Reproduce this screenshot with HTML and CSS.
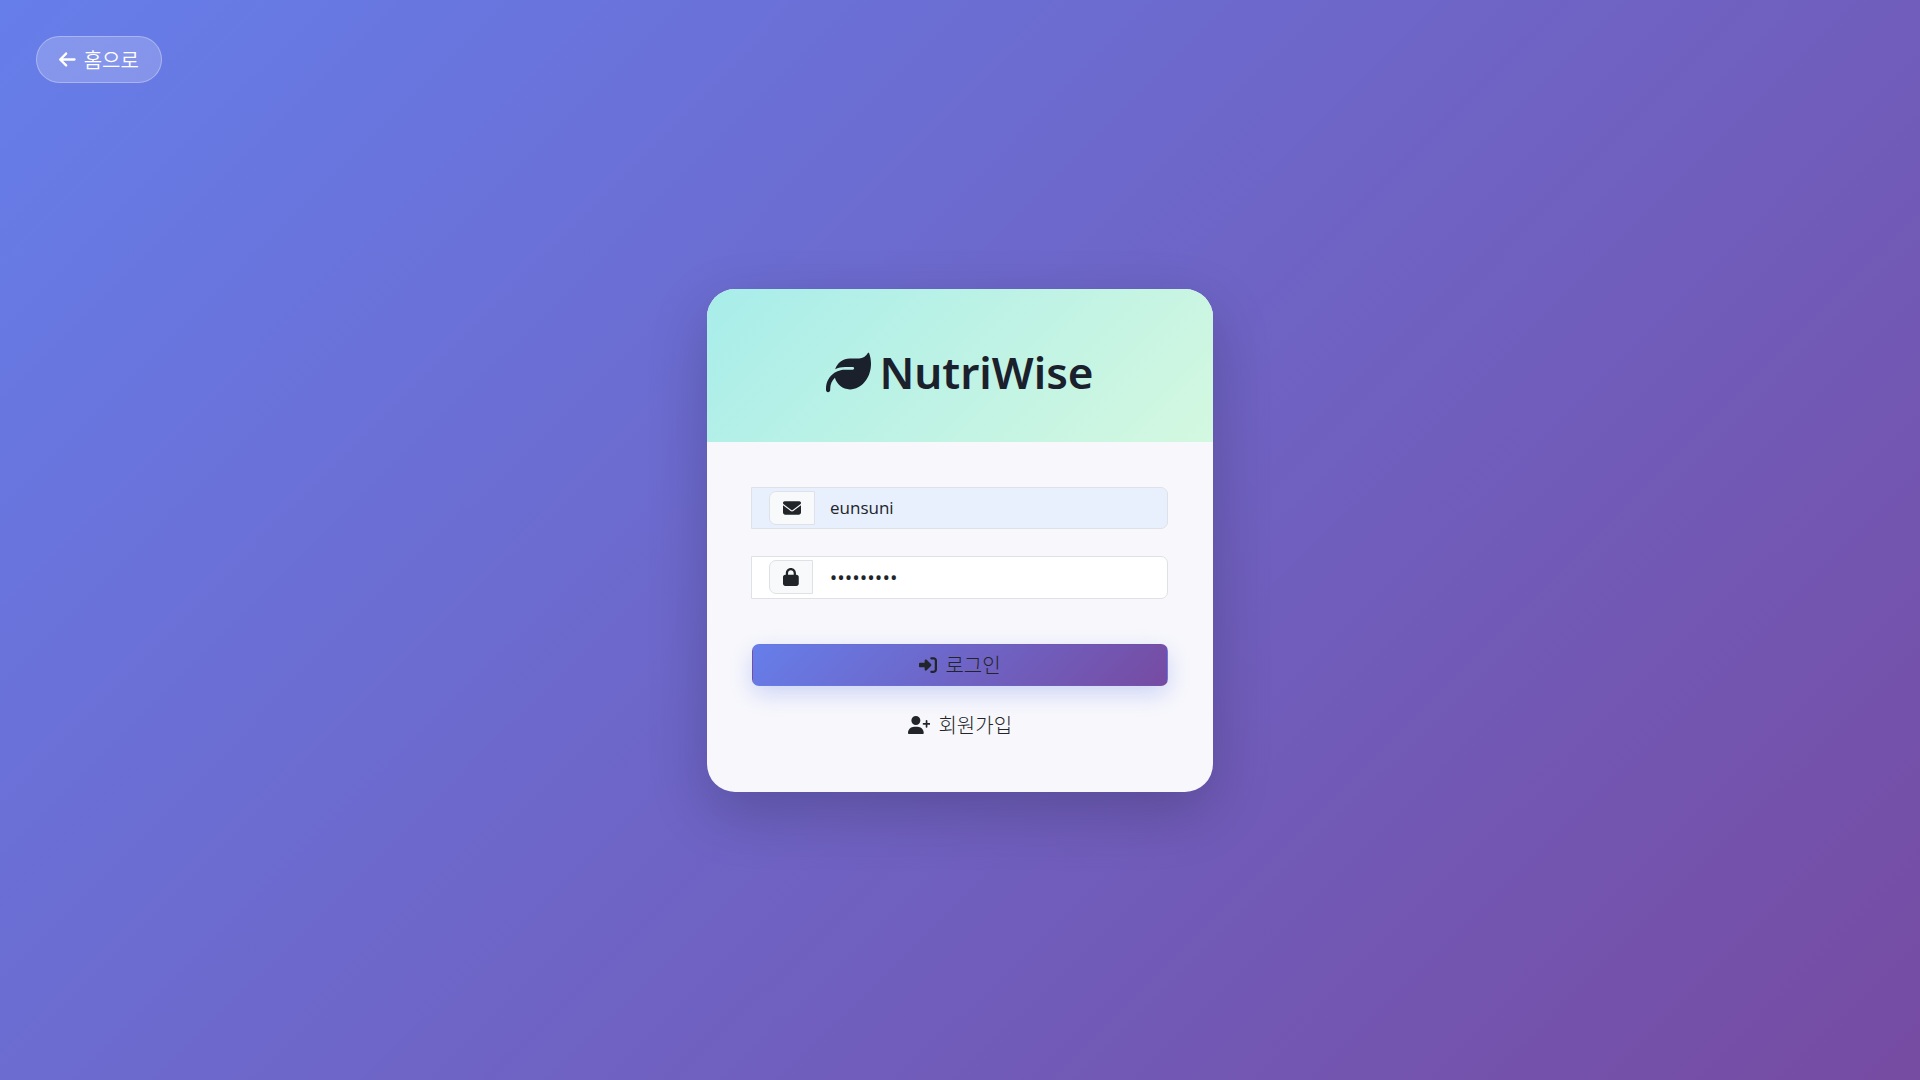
FILE: index.html
```html
<!DOCTYPE html>
<html lang="ko">
<head>
<meta charset="utf-8">
<meta name="viewport" content="width=device-width, initial-scale=1">
<title>NutriWise</title>
<link rel="stylesheet" href="styles.css">
</head>
<body>
<a class="home-link" href="#">
  <svg class="icon" viewBox="0 0 448 512" aria-hidden="true"><path d="M9.4 233.4c-12.5 12.5-12.5 32.8 0 45.3l160 160c12.5 12.5 32.8 12.5 45.3 0s12.5-32.8 0-45.3L109.2 288 416 288c17.7 0 32-14.3 32-32s-14.3-32-32-32l-306.7 0L214.6 118.6c12.5-12.5 12.5-32.8 0-45.3s-32.8-12.5-45.3 0l-160 160z"/></svg>
  <span>홈으로</span>
</a>
<main class="page">
  <section class="card">
    <header class="card-header">
      <h1 class="brand">
        <svg class="icon" viewBox="0 0 512 512" aria-hidden="true"><path d="M272 96c-78.6 0-145.1 51.5-167.7 122.5c33.6-17 71.5-26.5 111.7-26.5h88c8.8 0 16 7.2 16 16s-7.2 16-16 16H288 216s0 0 0 0c-16.6 0-32.7 1.9-48.3 5.4c-25.9 5.9-49.9 16.4-71.4 30.7c0 0 0 0 0 0C38.3 298.8 0 364.9 0 440v16c0 13.3 10.7 24 24 24s24-10.7 24-24V440c0-48.7 20.7-92.5 53.8-123.2C121.6 392.3 190.3 448 272 448l1 0c132.1-.7 239-130.9 239-291.4c0-42.6-7.5-83.1-21.1-119.6c-2.6-6.9-12.7-6.6-16.2-.1C455.9 72.1 418.7 96 376 96L272 96z"/></svg>
        <span>NutriWise</span>
      </h1>
    </header>
    <form class="card-body">
      <div class="field field-filled">
        <label class="addon" for="user" aria-label="아이디">
          <svg class="icon" viewBox="0 0 512 512" aria-hidden="true"><path d="M48 64C21.5 64 0 85.5 0 112c0 15.1 7.1 29.3 19.2 38.4L236.8 313.6c11.4 8.5 27 8.5 38.4 0L492.8 150.4c12.1-9.1 19.2-23.3 19.2-38.4c0-26.5-21.5-48-48-48H48zM0 176V384c0 35.3 28.7 64 64 64H448c35.3 0 64-28.7 64-64V176L294.4 339.2c-22.8 17.1-54 17.1-76.8 0L0 176z"/></svg>
        </label>
        <input class="input" id="user" type="text" value="eunsuni">
      </div>
      <div class="field field-password">
        <label class="addon" for="password" aria-label="비밀번호">
          <svg class="icon" viewBox="0 0 448 512" aria-hidden="true"><path d="M144 144v48H304V144c0-44.2-35.8-80-80-80s-80 35.8-80 80zM80 192V144C80 64.5 144.5 0 224 0s144 64.5 144 144v48h16c35.3 0 64 28.7 64 64V448c0 35.3-28.7 64-64 64H64c-35.3 0-64-28.7-64-64V256c0-35.3 28.7-64 64-64H80z"/></svg>
        </label>
        <input class="input" id="password" type="password" value="nutriwise">
      </div>
      <button class="btn btn-primary" type="submit">
        <svg class="icon" viewBox="0 0 512 512" aria-hidden="true"><path d="M217.9 105.9L340.7 228.7c7.2 7.2 11.3 17.1 11.3 27.3s-4.1 20.1-11.3 27.3L217.9 406.1c-6.4 6.4-15 9.9-24 9.9c-18.7 0-33.9-15.2-33.9-33.9l0-62.1L32 320c-17.7 0-32-14.3-32-32l0-64c0-17.7 14.3-32 32-32l128 0 0-62.1c0-18.7 15.2-33.9 33.9-33.9c9 0 17.6 3.6 24 9.9zM352 416l64 0c17.7 0 32-14.3 32-32l0-256c0-17.7-14.3-32-32-32l-64 0c-17.7 0-32-14.3-32-32s14.3-32 32-32l64 0c53 0 96 43 96 96l0 256c0 53-43 96-96 96l-64 0c-17.7 0-32-14.3-32-32s14.3-32 32-32z"/></svg>
        <span>로그인</span>
      </button>
      <a class="btn" href="#">
        <svg class="icon" viewBox="0 0 640 512" aria-hidden="true"><path d="M96 128a128 128 0 1 1 256 0A128 128 0 1 1 96 128zM0 482.3C0 383.8 79.8 304 178.3 304h91.4C368.2 304 448 383.8 448 482.3c0 16.4-13.3 29.7-29.7 29.7H29.7C13.3 512 0 498.7 0 482.3zM504 312V248H440c-13.3 0-24-10.7-24-24s10.7-24 24-24h64V136c0-13.3 10.7-24 24-24s24 10.7 24 24v64h64c13.3 0 24 10.7 24 24s-10.7 24-24 24H552v64c0 13.3-10.7 24-24 24s-24-10.7-24-24z"/></svg>
        <span>회원가입</span>
      </a>
    </form>
  </section>
</main>
</body>
</html>
```
FILE: styles.css
```css
*,
*::before,
*::after {
  box-sizing: border-box;
}

body {
  margin: 0;
  min-height: 100vh;
  background: linear-gradient(135deg, #667eea 0%, #764ba2 100%);
  color: #212529;
  font-family: "Open Sans", "Noto Sans CJK KR", sans-serif;
  font-size: 17px;
  line-height: 23px;
}

.icon {
  flex: none;
  height: 18px;
  fill: currentColor;
}

.page {
  display: flex;
  align-items: center;
  justify-content: center;
  min-height: 100vh;
  padding: 24px;
}

.home-link {
  position: absolute;
  top: 36px;
  left: 36px;
  display: flex;
  align-items: center;
  gap: 8px;
  padding: 11px 22px;
  border: 1px solid rgba(255, 255, 255, 0.3);
  border-radius: 24px;
  background: rgba(255, 255, 255, 0.2);
  color: #fff;
  font-family: "Noto Sans CJK KR", sans-serif;
  font-size: 20px;
  font-weight: 350;
  text-decoration: none;
}

.home-link .icon {
  height: 19px;
}

.card {
  width: 100%;
  max-width: 506px;
  overflow: hidden;
  border-radius: 28px;
  background: #f8f8fc;
  box-shadow: 0 20px 60px rgba(0, 0, 0, 0.2);
}

.card-header {
  padding: 52px 45px 38px;
  background: linear-gradient(135deg, #a8edea 0%, #d4f8e0 100%);
}

.brand {
  display: flex;
  align-items: center;
  justify-content: center;
  gap: 8px;
  margin: 0;
  color: #1a202c;
  font-family: "Noto Sans", sans-serif;
  font-size: 44px;
  font-weight: 600;
  line-height: 63px;
}

.brand .icon {
  height: 45px;
}

.card-body {
  display: flex;
  flex-direction: column;
  padding: 45px 45px 46px;
}

.field {
  display: flex;
  align-items: center;
  height: 42px;
  margin: 0 0 27px -1px;
  padding-left: 17px;
  border: 1px solid #dee2e6;
  border-radius: 0 7px 7px 0;
  background: #fff;
}

.field-filled {
  background: #e8f0fe;
}

.field-password {
  height: 43px;
}

.addon {
  display: flex;
  align-items: center;
  height: 34px;
  padding: 0 13px;
  border: 1px solid #dee2e6;
  border-radius: 7px 0 0 7px;
  background: #f8f9fa;
}

.addon .icon {
  height: 18px;
}

.input {
  flex: 1;
  min-width: 0;
  padding: 0 15px;
  border: 0;
  outline: 0;
  background: transparent;
  color: #212529;
  font: inherit;
}

.field-password .input {
  padding: 0 17px;
  font-size: 20px;
}

.btn {
  display: flex;
  align-items: center;
  justify-content: center;
  gap: 8px;
  height: 42px;
  border: 1px solid transparent;
  border-radius: 7px;
  background: none;
  color: #212529;
  font-family: "Noto Sans CJK KR", sans-serif;
  font-size: 20px;
  font-weight: 300;
  line-height: 23px;
  text-decoration: none;
}

.btn-primary {
  margin: 18px 0;
  background: linear-gradient(135deg, #667eea 0%, #764ba2 100%);
  box-shadow: 0 8px 24px rgba(102, 126, 234, 0.3);
  cursor: pointer;
}
```
